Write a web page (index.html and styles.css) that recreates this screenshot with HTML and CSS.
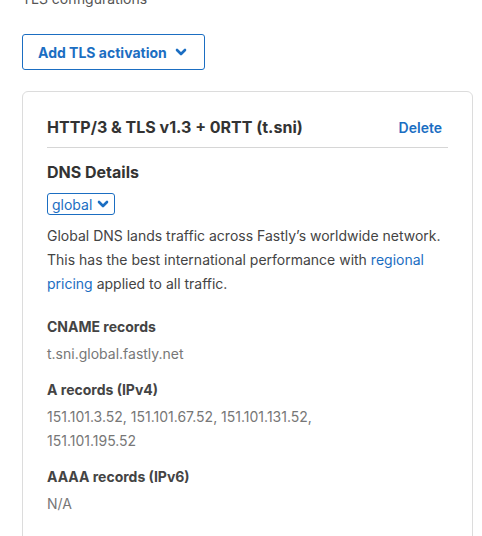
FILE: index.html
```html
<!DOCTYPE html>
<html lang="en">
<head>
    <meta charset="UTF-8">
    <meta name="viewport" content="width=device-width, initial-scale=1.0">
    <title>TLS configurations</title>
    <link rel="stylesheet" href="styles.css">
</head>
<body>
    <div class="page">
        <p class="section-title">TLS configurations</p>

        <button class="add-btn" type="button">
            Add TLS activation
            <svg class="chev" width="12" height="12" viewBox="0 0 12 12"><path d="M2 4l4 4 4-4" fill="none" stroke="currentColor" stroke-width="2.6" stroke-linecap="round" stroke-linejoin="round"/></svg>
        </button>

        <div class="card">
            <div class="card-head">
                <h2>HTTP/3 &amp; TLS v1.3 + 0RTT (t.sni)</h2>
                <a href="#" class="delete">Delete</a>
            </div>

            <h3 class="dns-title">DNS Details</h3>
            <div class="region-select">
                global
                <svg class="chev" width="12" height="12" viewBox="0 0 12 12"><path d="M2 4l4 4 4-4" fill="none" stroke="currentColor" stroke-width="2.6" stroke-linecap="round" stroke-linejoin="round"/></svg>
            </div>
            <p class="desc">Global DNS lands traffic across Fastly’s worldwide network. This has the best international performance with <a href="#">regional pricing</a> applied to all traffic.</p>

            <dl class="records">
                <dt>CNAME records</dt>
                <dd>t.sni.global.fastly.net</dd>
                <dt>A records (IPv4)</dt>
                <dd>151.101.3.52, 151.101.67.52, 151.101.131.52,<br>151.101.195.52</dd>
                <dt>AAAA records (IPv6)</dt>
                <dd>N/A</dd>
            </dl>
        </div>
    </div>
</body>
</html>
```

FILE: styles.css
```css
body {
    margin: 0;
    font-family: 'Inter', 'Noto Sans', sans-serif;
    background: #fff;
    color: #444;
}

.page {
    padding: 0 9px 0 22px;
    margin-top: -10px;
}

.section-title {
    margin: 0;
    font-size: 14px;
    line-height: 18px;
    color: #555;
}

.add-btn {
    display: flex;
    align-items: center;
    gap: 8px;
    margin-top: 26px;
    height: 36px;
    padding: 0 17px 0 15px;
    background: #fff;
    border: 1px solid #1b6ec2;
    border-radius: 3px;
    color: #1b6ec2;
    font-family: inherit;
    font-size: 14px;
    font-weight: 700;
}

.chev {
    display: block;
}

.card {
    margin-top: 21px;
    border: 1px solid #dcdcdc;
    border-radius: 6px;
    padding: 20px 24px 30px;
}

.card-head {
    display: flex;
    justify-content: space-between;
    align-items: center;
    padding: 4px 6px 9px 0;
    border-bottom: 1px solid #d6d6d6;
}

.card-head h2 {
    margin: 0;
    font-size: 16px;
    line-height: 22px;
    font-weight: 700;
    color: #333;
}

.delete {
    color: #1b6ec2;
    font-size: 14px;
    font-weight: 600;
    text-decoration: none;
}

.dns-title {
    margin: 13px 0 0;
    font-size: 16px;
    line-height: 22px;
    font-weight: 700;
    color: #333;
}

.region-select {
    display: inline-flex;
    align-items: center;
    gap: 5px;
    margin-top: 10px;
    height: 20px;
    padding: 0 5px 0 4px;
    border: 1px solid #1b6ec2;
    border-radius: 3px;
    color: #1b6ec2;
    font-size: 14px;
}

.desc {
    margin: 9px 0 0;
    font-size: 14px;
    line-height: 24px;
    color: #444;
}

.desc a {
    color: #1b6ec2;
    text-decoration: none;
}

.records {
    margin: 20px 0 0;
}

.records dt {
    font-size: 14px;
    line-height: 22px;
    font-weight: 700;
    color: #444;
}

.records dd {
    margin: 4px 0 13px;
    font-size: 14px;
    line-height: 24px;
    color: #777;
}
```
